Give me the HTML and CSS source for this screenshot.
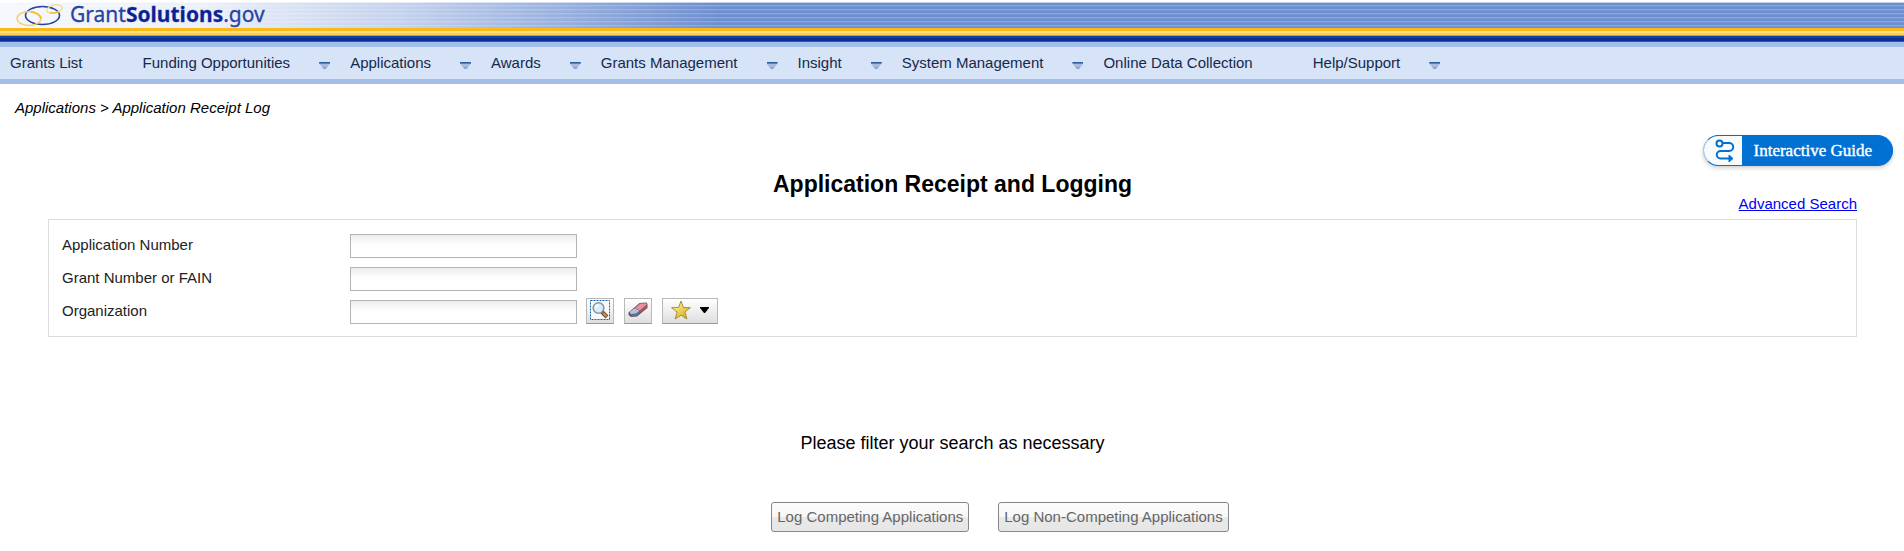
FILE: index.html
```html
<!DOCTYPE html>
<html lang="en">
<head>
<meta charset="utf-8">
<title>Application Receipt and Logging</title>
<link rel="stylesheet" href="styles.css">
</head>
<body>
<header class="banner">
  <div class="brand">
    <svg class="brand-mark" width="48" height="24" viewBox="0 0 48 24" fill="none" aria-hidden="true">
      <ellipse cx="26.500" cy="12.500" rx="17" ry="9" stroke="#2743a4" stroke-width="1.600"/>
      <ellipse cx="13" cy="15.500" rx="12" ry="7" stroke="#f3cf69" stroke-width="1.400"/>
      <path d="M15 8.800c5 .7 9 3.400 10 6.700" stroke="#f6bd22" stroke-width="1.800"/>
      <ellipse cx="38.500" cy="6" rx="8" ry="4" stroke="#f5dc93" stroke-width="1.300" transform="rotate(-12 38.500 6)"/>
      <path d="M34 9.500c3 1 6 .5 9-1" stroke="#f0bd3a" stroke-width="1.500"/>
    </svg>
    <span class="brand-name">Grant<b>Solutions</b>.gov</span>
  </div>
</header>
<nav class="menu">
  <a class="menu-item" href="#">Grants List</a>
  <a class="menu-item has-sub" href="#">Funding Opportunities</a>
  <a class="menu-item has-sub" href="#">Applications</a>
  <a class="menu-item has-sub" href="#">Awards</a>
  <a class="menu-item has-sub" href="#">Grants Management</a>
  <a class="menu-item has-sub" href="#">Insight</a>
  <a class="menu-item has-sub" href="#">System Management</a>
  <a class="menu-item" href="#">Online Data Collection</a>
  <a class="menu-item has-sub" href="#">Help/Support</a>
</nav>
<div class="crumbs">Applications &gt; Application Receipt Log</div>
<button class="guide" type="button">
  <span class="guide-icon">
    <svg width="20" height="24" viewBox="0 0 20 24" fill="none" stroke="#0070d2" stroke-width="2" aria-hidden="true">
      <circle cx="4.500" cy="4.500" r="3"/>
      <path d="M7.500 4h6.700a4 4 0 0 1 0 8H5.500a3.700 3.700 0 0 0 0 7.500H16"/>
      <path d="M14 16l4 3.500-4 3.500z" fill="#0070d2" stroke-width="1"/>
    </svg>
  </span>
  <span class="guide-label">Interactive Guide</span>
</button>
<main class="page">
  <div class="heading">
    <h1 class="title">Application Receipt and Logging</h1>
    <a class="advanced" href="#">Advanced Search</a>
  </div>
  <form class="panel">
    <div class="field">
      <label class="label" for="appno">Application Number</label>
      <input class="text" id="appno" type="text">
    </div>
    <div class="field">
      <label class="label" for="grantno">Grant Number or FAIN</label>
      <input class="text" id="grantno" type="text">
    </div>
    <div class="field">
      <label class="label" for="org">Organization</label>
      <input class="text" id="org" type="text">
      <div class="tools">
        <button class="tool" type="button" aria-label="Look up organization">
          <svg width="20" height="20" viewBox="0 0 20 20" fill="none">
            <rect x=".5" y=".5" width="19" height="19" fill="#f8fbfe" stroke="#1465a8" stroke-dasharray="2 1"/>
            <path d="M12 12l5 5" stroke="#6b4a2b" stroke-width="4"/>
            <path d="M13 13l3.500 3.500" stroke="#d59a4a" stroke-width="2"/>
            <circle cx="8.500" cy="8" r="5.300" fill="#dbeefa" stroke="#8b939b" stroke-width="1.600"/>
            <path d="M5.500 8a3 3 0 0 1 3-3" stroke="#fff" stroke-width="1.500"/>
          </svg>
        </button>
        <button class="tool" type="button" aria-label="Clear organization">
          <svg width="20" height="20" viewBox="0 0 20 20">
            <path d="M.5 12.500L11.500 3l7-.5 1 1.500v4L9 16.500l-6 .5-2.500-2z" fill="#5f5868"/>
            <path d="M7 8l5-4.200 6-.6.8 1.300L12 10.500z" fill="#ea9196"/>
            <path d="M12 11l7-5.500v2.200L12.500 13z" fill="#b4505c"/>
            <path d="M2 11.800L6.500 8.300l5 2.400-3.500 2.800-5.500.5z" fill="#b9c0dc"/>
            <path d="M2.500 14.500l5.500-.5 3.500-2.800v2L8.500 15.500l-5 .6z" fill="#66709b"/>
          </svg>
        </button>
        <button class="tool tool-wide" type="button" aria-label="Favorites">
          <svg width="20" height="20" viewBox="0 0 20 20">
            <defs><linearGradient id="gold" x1="0" y1="0" x2="1" y2="1"><stop offset=".2" stop-color="#fff08c"/><stop offset="1" stop-color="#d19a08"/></linearGradient></defs>
            <path d="M10 1l2.400 6.500 7 .2-5.500 4.300 2 7-5.900-3.800L4.100 19l2-7L.6 7.700l7-.2z" fill="url(#gold)" stroke="#a98c3c"/>
          </svg>
          <svg width="9" height="6" viewBox="0 0 9 6"><path d="M0 0h9v1L5 6H4L0 1z" fill="#000"/></svg>
        </button>
      </div>
    </div>
  </form>
  <p class="message">Please filter your search as necessary</p>
  <div class="actions">
    <button class="action" type="button">Log Competing Applications</button>
    <button class="action" type="button">Log Non-Competing Applications</button>
  </div>
</main>
</body>
</html>
```
FILE: styles.css
```css
* { box-sizing: border-box; }
body {
  margin: 0;
  background: #fff;
  color: #000;
  font: 15px/20px "Liberation Sans", Arial, sans-serif;
}
button, input { font: inherit; }
.banner {
  padding-top: 2px;
  background: #fff;
}
.brand {
  display: flex;
  align-items: flex-start;
  gap: 6px;
  height: 26px;
  padding: 1px 0 0 16px;
  background:
    linear-gradient(90deg, #fffe 0, #fffd 200px, #fff9 400px, #fff0 720px),
    linear-gradient(#c3d0e8 0 1px, #0000 1px),
    repeating-linear-gradient(#7896d2 0 1px, #6c8fd1 1px 3px, #8aa5da 3px 4px);
}
.brand-mark { display: block; }
.brand-name {
  color: #2743a4;
  font: 21px/22px "Noto Sans", sans-serif;
  -webkit-text-stroke: 0.3px #2743a4;
}
.brand-name b { color: #0c1f94; }
.banner::after {
  content: "";
  display: block;
  height: 14px;
  background: linear-gradient(#f9ba17 0 3px, #ffe07a 3px 5px, #ffd04a 5px 7px, #c79a2c 7px 8px, #1a3f9e 8px 10px, #082f93 10px 13px, #3056b4 13px 14px);
}
.menu {
  display: flex;
  flex-wrap: wrap;
  padding: 6px 10px;
  border: solid #a2bee9;
  border-width: 5px 0;
  background: #d7e3f6;
}
.menu-item {
  display: flex;
  margin-right: 60px;
  color: #15294b;
  text-decoration: none;
}
.has-sub { margin-right: 20px; }
.has-sub::after {
  content: "";
  width: 11px;
  height: 7px;
  margin: 9px 0 0 29px;
  background: linear-gradient(#2f5c9c 0 1px, #5f80b8 1px 2px, #a9bce0 2px 4px, #7d97cc);
  clip-path: polygon(0 0, 100% 0, 100% 20%, 60% 100%, 40% 100%, 0 20%);
}
.crumbs {
  padding: 14px 15px 0;
  font-style: italic;
}
.guide {
  position: absolute;
  top: 135px;
  right: 11px;
  display: flex;
  height: 31px;
  padding: 0;
  overflow: hidden;
  border: 1px solid #a9cdec;
  border-color: #0070d2 #0070d2 #0070d2 #a9cdec;
  border-radius: 16px;
  background: #0070d2;
  box-shadow: 0 2px 4px #0003;
  color: #fff;
  font: 17px/29px "Liberation Serif", "Times New Roman", serif;
}
.guide-icon {
  display: flex;
  align-items: center;
  padding: 0 7px 0 11px;
  background: #f8fafc;
}
.guide-label {
  padding: 0 20px 0 12px;
  -webkit-text-stroke: 0.4px #fff;
}
.page { padding: 52px 47px 0 48px; }
.heading {
  display: grid;
  grid-template-columns: 1fr auto 1fr;
}
.title {
  grid-column: 2;
  margin: 0;
  font-size: 23px;
  line-height: 28px;
}
.advanced {
  justify-self: end;
  margin-top: 24px;
  color: #00e;
}
.panel {
  display: flex;
  flex-direction: column;
  gap: 7px;
  margin-top: 5px;
  padding: 12px 13px;
  border: 1px solid #ddd;
  color: #222;
}
.field {
  display: flex;
  align-items: flex-end;
  min-height: 26px;
}
.label {
  width: 288px;
  padding-bottom: 3px;
}
.text {
  width: 227px;
  height: 24px;
  border: 1px solid #b3b3b3;
  background: linear-gradient(#ededed, #fff 10px);
}
.tools {
  display: flex;
  gap: 10px;
  margin-left: 9px;
}
.tool {
  display: flex;
  align-items: center;
  justify-content: center;
  gap: 9px;
  width: 28px;
  height: 26px;
  padding: 0 0 2px;
  border: 1px solid #b9b9b9;
  border-bottom-color: #999;
  background: linear-gradient(#fff, #dedede);
}
.tool-wide { width: 56px; }
.message {
  margin: 94px 0 0;
  font-size: 18px;
  line-height: 24px;
  text-align: center;
}
.actions {
  display: flex;
  justify-content: center;
  gap: 29px;
  margin-top: 47px;
  padding: 0 0 18px 95px;
}
.action {
  height: 30px;
  padding: 0 5px;
  border: 1px solid #888;
  border-radius: 3px;
  background: linear-gradient(#fcfcfc, #f7f7f7 50%, #e9e9e9 50%, #e6e6e6);
  color: #666;
}
```
